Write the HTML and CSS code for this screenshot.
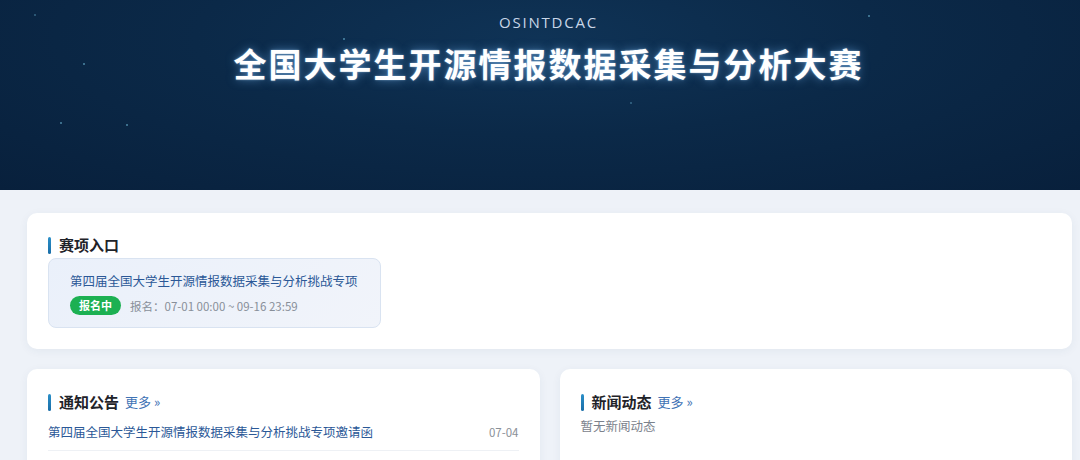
FILE: index.html
```html
<!DOCTYPE html>
<html lang="zh">
<head>
<meta charset="utf-8">
<title>OSINTDCAC</title>
<link rel="stylesheet" href="styles.css">
</head>
<body>
<header class="hero">
  <span class="star s1"></span><span class="star s2"></span><span class="star s3"></span><span class="star s4"></span><span class="star s5"></span><span class="star s6"></span><span class="star s7"></span>
  <div class="hero-sub">OSINTDCAC</div>
  <h1 class="hero-title">全国大学生开源情报数据采集与分析大赛</h1>
</header>
<main class="main">
  <section class="card card-entry">
    <h2 class="sec-title"><span class="bar"></span>赛项入口</h2>
    <div class="entry">
      <div class="entry-name">第四届全国大学生开源情报数据采集与分析挑战专项</div>
      <div class="entry-meta"><span class="badge">报名中</span><span class="entry-date">报名：07-01 00:00 ~ 09-16 23:59</span></div>
    </div>
  </section>
  <div class="row">
    <section class="card card-half">
      <h2 class="sec-title"><span class="bar"></span>通知公告<a class="more">更多 »</a></h2>
      <div class="list-item"><span class="item-text">第四届全国大学生开源情报数据采集与分析挑战专项邀请函</span><span class="item-date">07-04</span></div>
    </section>
    <section class="card card-half">
      <h2 class="sec-title"><span class="bar"></span>新闻动态<a class="more">更多 »</a></h2>
      <div class="empty">暂无新闻动态</div>
    </section>
  </div>
</main>
</body>
</html>
```
FILE: styles.css
```css
* { box-sizing: border-box; }
html, body { margin: 0; padding: 0; }
body {
  background: #eef2f8;
  font-family: "Noto Sans CJK SC", "Noto Sans", sans-serif;
  color: #222;
  height: 460px;
  overflow: hidden;
}
.hero {
  position: relative;
  height: 190px;
  background: radial-gradient(ellipse at 50% 20%, #0f3356 0%, #0b2948 45%, #08203c 100%);
  text-align: center;
  padding: 11px 0 0 17px;
}
.hero-sub {
  font-family: "Open Sans", "Noto Sans", sans-serif;
  font-size: 15px;
  letter-spacing: 1.8px;
  color: #c8d6e8;
  line-height: 22px;
}
.hero-title {
  margin: 7px 0 0;
  font-size: 33px;
  font-weight: 700;
  letter-spacing: 2px;
  color: #ffffff;
  line-height: 46px;
  text-shadow: 0 0 10px rgba(120, 190, 255, 0.55), 0 0 2px rgba(200, 230, 255, 0.6);
}
.star {
  position: absolute;
  width: 2px; height: 2px;
  border-radius: 50%;
  background: rgba(120, 200, 230, 0.6);
}
.s1 { left: 34px; top: 14px; }
.s2 { left: 83px; top: 63px; }
.s3 { left: 60px; top: 122px; }
.s4 { left: 126px; top: 124px; }
.s5 { left: 343px; top: 38px; }
.s6 { left: 630px; top: 102px; }
.s7 { left: 868px; top: 15px; }
.s1, .s6 { background: rgba(120, 200, 230, 0.4); }

.main {
  padding: 23px 8px 0 27px;
}
.card {
  background: #fff;
  border-radius: 10px;
  box-shadow: 0 2px 10px rgba(30, 60, 110, 0.06);
}
.card-entry {
  padding: 22px 21px 21px 21px;
}
.sec-title {
  margin: 0;
  display: flex;
  align-items: center;
  font-size: 15px;
  font-weight: 700;
  color: #1f2329;
  line-height: 20px;
}
.bar {
  width: 3px;
  height: 17px;
  border-radius: 2px;
  background: linear-gradient(#2a8fc8, #1a6ea8);
  margin-right: 8px;
}
.more {
  font-size: 13px;
  font-weight: 400;
  color: #3f73b5;
  margin-left: 6px;
}
.entry {
  margin-top: 3px;
  width: 333px;
  background: linear-gradient(135deg, #eaf0fa, #f1f4fa);
  border: 1px solid #d9e3f1;
  border-radius: 8px;
  padding: 12px 10px 12px 21px;
}
.entry-name {
  font-size: 12.5px;
  color: #2b5897;
  line-height: 20px;
  white-space: nowrap;
}
.entry-meta {
  display: flex;
  align-items: center;
  margin-top: 5px;
}
.badge {
  background: #1cb052;
  color: #fff;
  font-size: 11px;
  font-weight: 700;
  border-radius: 10px;
  padding: 0 9px;
  line-height: 19px;
  height: 19px;
}
.entry-date {
  margin-left: 9px;
  font-size: 11.5px;
  color: #888f99;
}
.row {
  display: flex;
  gap: 20px;
  margin-top: 20px;
}
.card-half {
  flex: 1;
  height: 110px;
  border-radius: 10px 10px 0 0;
  padding: 23px 21px 0 21px;
}
.list-item {
  display: flex;
  justify-content: space-between;
  align-items: center;
  margin-top: 10px;
  padding-bottom: 8px;
  border-bottom: 1px solid #eef1f5;
}
.item-text {
  font-size: 12.5px;
  color: #2b5897;
  line-height: 20px;
}
.item-date {
  font-size: 11.5px;
  color: #8a9098;
}
.empty {
  margin-top: 4px;
  font-size: 12.5px;
  color: #7b828c;
  line-height: 20px;
}
```
